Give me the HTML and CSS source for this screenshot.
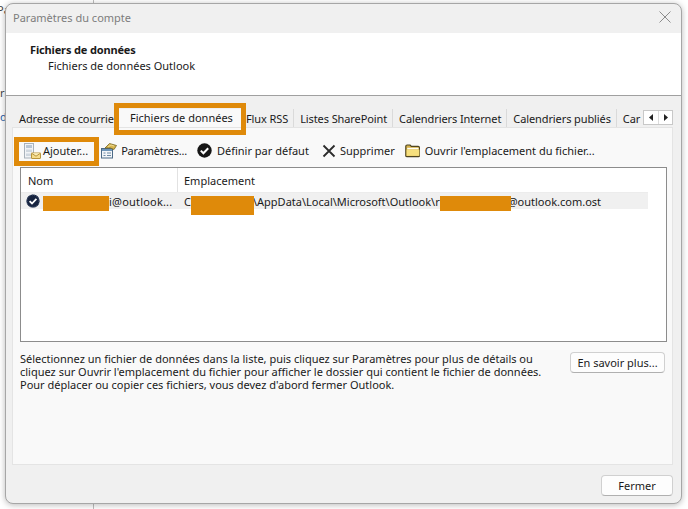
FILE: index.html
```html
<!DOCTYPE html>
<html lang="fr">
<head>
<meta charset="utf-8">
<title>Paramètres du compte</title>
<link rel="stylesheet" href="styles.css">
</head>
<body>
<div class="backdrop">
  <span class="bg-text bg-pa">Pa</span>
  <span class="bg-text bg-r">r</span>
  <span class="bg-text bg-d">d</span>
  <i class="bg-line"></i>
</div>
<main class="window">
  <header class="titlebar">
    <span class="title">Paramètres du compte</span>
    <svg class="close" width="12" height="12" viewBox="0 0 12 12"><path d="M.5.5l11 11M11.5.5l-11 11" stroke="#8c8c8c" stroke-width="1" fill="none"/></svg>
  </header>
  <section class="head">
    <div class="head-title">Fichiers de données</div>
    <div class="head-sub">Fichiers de données Outlook</div>
  </section>
  <section class="body">
    <nav class="tabs">
      <span class="tab tab-first">Adresse de courrier</span>
      <span class="tab tab-active">Fichiers de données</span>
      <span class="tab tab-flux">Flux RSS</span>
      <span class="tab">Listes SharePoint</span>
      <span class="tab">Calendriers Internet</span>
      <span class="tab">Calendriers publiés</span>
      <span class="tab tab-last">Car</span>
      <span class="scroller">
        <span class="arrow"><svg width="5" height="7" viewBox="0 0 5 7"><path d="M4 0v7L0 3.5z" fill="#222"/></svg></span>
        <span class="arrow"><svg width="5" height="7" viewBox="0 0 5 7"><path d="M1 0v7l4-3.5z" fill="#222"/></svg></span>
      </span>
    </nav>
    <div class="panel">
      <div class="toolbar">
        <span class="tool tool-add">
          <svg width="17" height="16" viewBox="0 0 17 16"><rect x=".5" y=".5" width="9" height="14.5" fill="#f1f3f6" stroke="#a9b2bb"/><rect x="2" y="2" width="6" height="3" fill="#b9c6d4"/><rect x="2" y="6.5" width="6" height="2.5" fill="#cfd7df"/><rect x="2" y="10.5" width="6" height="2.5" fill="#cfd7df"/><rect x="7.5" y="10" width="9" height="5.5" rx=".5" fill="#f5dc8c" stroke="#b8943c"/><path d="M7.5 10.2l4.5 3 4.5-3" fill="#fbeebb" stroke="#b8943c"/></svg>
          <span>Ajouter...</span>
        </span>
        <span class="tool tool-params">
          <svg width="17" height="17" viewBox="0 0 17 17"><rect x="1.5" y="6.5" width="11" height="9.5" fill="#f2f5f8" stroke="#4c6a86"/><rect x="2" y="7" width="10" height="2" fill="#6d94b8"/><path d="M3.5 11h2M7 11h4M3.5 13.5h2M7 13.5h4" stroke="#6d89a3"/><path d="M5 6l4.5-4.5 7 2-2.5 4-3.5-1.5z" fill="#d8b650" stroke="#75631f" stroke-width=".8"/><path d="M8 5l3-2 3 1" fill="none" stroke="#f3e2a0" stroke-width=".8"/></svg>
          <span class="tight">Paramètres...</span>
        </span>
        <span class="tool tool-default">
          <svg width="15" height="15" viewBox="0 0 15 15"><circle cx="7.5" cy="7.5" r="7.2" fill="#161616"/><path d="M3.8 7.6l2.6 2.6 4.8-5" fill="none" stroke="#fff" stroke-width="2"/></svg>
          <span>Définir par défaut</span>
        </span>
        <span class="tool tool-del">
          <svg width="14" height="14" viewBox="0 0 14 14"><path d="M1.5 1.5l11 11M12.5 1.5l-11 11" stroke="#2c2c2c" stroke-width="1.8" fill="none"/></svg>
          <span>Supprimer</span>
        </span>
        <span class="tool tool-open">
          <svg width="16" height="14" viewBox="0 0 16 14"><path d="M.8 11.7V2.3q0-1.3 1.3-1.3h3l1.3 1.4h6.8q1.2 0 1.2 1.2v8.1q0 1-1 1H1.8q-1 0-1-1z" fill="#d6b24a" stroke="#4f4520" stroke-width="1.2"/><path d="M2.2 3.8h11.4v1.6H2.2z" fill="#fdfdf6"/><path d="M1.6 5.6h12.8v6.2H1.6z" fill="#f7e07e"/></svg>
          <span>Ouvrir l'emplacement du fichier...</span>
        </span>
      </div>
      <div class="list">
        <div class="list-head">
          <span class="col-name">Nom</span>
          <span class="col-path">Emplacement</span>
        </div>
        <div class="list-row">
          <span class="col-name cell-name">
            <svg width="14" height="14" viewBox="0 0 14 14"><circle cx="7" cy="7" r="6.6" fill="#16233f"/><circle cx="7" cy="7" r="6" fill="none" stroke="#51617f" stroke-dasharray="1 1.2"/><path d="M3.6 7.1l2.4 2.4 4.4-4.6" fill="none" stroke="#fff" stroke-width="1.8"/></svg>
            <span class="name-text">i@outlook...</span>
          </span>
          <span class="col-path cell-path"><span class="path-c">C</span><span class="path-mid">\AppData\Local\Microsoft\Outlook\r</span><span class="path-end">@outlook.com.ost</span></span>
          <i class="mask mask-a"></i><i class="mask mask-b"></i><i class="mask mask-c"></i>
        </div>
      </div>
      <div class="info">
        <p class="info-text">Sélectionnez un fichier de données dans la liste, puis cliquez sur Paramètres pour plus de détails ou<br>cliquez sur Ouvrir l'emplacement du fichier pour afficher le dossier qui contient le fichier de données.<br>Pour déplacer ou copier ces fichiers, vous devez d'abord fermer Outlook.</p>
        <span class="btn btn-more">En savoir plus...</span>
      </div>
    </div>
    <footer class="foot"><span class="btn btn-close">Fermer</span></footer>
    <i class="frame frame-tab"></i>
    <i class="frame frame-add"></i>
  </section>
</main>
</body>
</html>
```
FILE: styles.css
```css
* { box-sizing: border-box; }
html, body { margin: 0; height: 100%; }
body {
  position: relative;
  width: 688px;
  height: 509px;
  overflow: hidden;
  background: #fff;
  font: 11px/13px "Noto Sans", sans-serif;
  color: #1a1a1a;
}
.backdrop { position: absolute; inset: 0; overflow: hidden; }
.bg-text { position: absolute; color: #444; }
.bg-pa { top: 3px; left: -3px; }
.bg-r { top: 86px; left: 0; }
.bg-d { top: 110px; left: 0; color: #2a5fa8; }
.bg-line { position: absolute; left: 93px; top: 0; width: 1px; height: 509px; background: #bdbdbd; }
.window {
  position: absolute;
  left: 5px;
  top: 3px;
  width: 677px;
  height: 501px;
  display: flex;
  flex-direction: column;
  background: #f0f0f0;
  border: 1px solid #a6a6a6;
  border-radius: 8px;
  box-shadow: 0 1px 6px rgba(0,0,0,.28);
}
.titlebar {
  height: 29px;
  flex: none;
  display: flex;
  align-items: center;
  justify-content: space-between;
  padding: 0 10px 3px 7px;
}
.title { color: #7d7d7d; }
.close { display: block; }
.head {
  height: 63px;
  flex: none;
  background: #fff;
  border-bottom: 1px solid #a0a0a0;
  padding: 9px 0 0 24px;
}
.head-title { font-weight: 700; line-height: 16px; letter-spacing: -.15px; }
.head-sub { padding-left: 18px; line-height: 16px; }
.body { flex: 1; display: flex; flex-direction: column; position: relative; padding: 13px 8px 0 6px; }
.tabs {
  height: 18px;
  flex: none;
  display: flex;
  position: relative;
  overflow: hidden;
  background: #f0f0f0;
  letter-spacing: -.1px;
}
.tab {
  flex: none;
  padding: 3px 5px 0 6px;
  border-right: 1px solid #dadada;
  background: #f0f0f0;
  white-space: nowrap;
}
.tab-first { width: 106px; padding-left: 7px; border-right: 0; overflow: hidden; }
.tab-active { width: 124px; background: #f9f9f9; padding: 2px 0 0 12px; border-right: 0; letter-spacing: 0; }
.tab-flux { padding-left: 4px; }
.tab-last { border-right: 0; }
.scroller {
  position: absolute;
  right: 0;
  top: 1px;
  display: flex;
  height: 15px;
  background: #fff;
  border: 1px solid #c8c8c8;
}
.arrow { width: 14px; display: flex; align-items: center; justify-content: center; }
.arrow + .arrow { border-left: 1px solid #dcdcdc; }
.panel {
  height: 338px;
  flex: none;
  background: #f9f9f9;
  border: 1px solid #e4e4e4;
  padding: 0 5px 0 7px;
  display: flex;
  flex-direction: column;
}
.toolbar { height: 39px; flex: none; display: flex; align-items: center; padding-top: 6px; }
.tool { display: flex; align-items: center; gap: 4px; white-space: nowrap; }
.tight { letter-spacing: -.2px; }
.tool-add { margin-left: 4px; gap: 2px; }
.tool-params { margin-left: 12px; gap: 4px; }
.tool-default { margin-left: 10px; gap: 5px; }
.tool-del { margin-left: 13px; gap: 4px; }
.tool-open { margin-left: 10px; }
.list {
  height: 175px;
  flex: none;
  background: #fff;
  border: 1px solid #8c8c8c;
}
.list-head {
  height: 25px;
  width: 627px;
  display: flex;
  align-items: center;
  border-bottom: 1px solid #ececec;
}
.list-head .col-name { width: 157px; height: 100%; display: flex; align-items: center; padding-left: 7px; border-right: 1px solid #e2e2e2; }
.list-head .col-path { padding-left: 6px; }
.list-row {
  position: relative;
  width: 627px;
  height: 16px;
  background: #f0f0f0;
  display: flex;
  align-items: center;
}
.cell-name { width: 157px; display: flex; align-items: center; padding-left: 5px; }
.name-text { margin-left: 69px; letter-spacing: .2px; }
.cell-path { padding-left: 6px; white-space: nowrap; }
.path-mid { margin-left: 62px; }
.path-end { margin-left: 68px; }
.mask { position: absolute; background: #df8a0a; }
.mask-a { left: 22px; top: 3px; width: 66px; height: 15px; }
.mask-b { left: 170px; top: 3px; width: 63px; height: 19px; }
.mask-c { left: 419px; top: 3px; width: 71px; height: 15px; }
.info { display: flex; justify-content: space-between; align-items: flex-start; padding-top: 10px; }
.info-text { margin: 0; white-space: nowrap; }
.btn {
  display: flex;
  align-items: center;
  justify-content: center;
  background: #fdfdfd;
  border: 1px solid #d0d0d0;
  border-bottom-color: #b0b0b0;
  border-radius: 4px;
}
.btn-more { width: 95px; height: 21px; margin-right: 2px; }
.foot { flex: 1; display: flex; justify-content: flex-end; align-items: flex-start; padding-top: 10px; }
.btn-close { width: 72px; height: 21px; }
.frame { position: absolute; border: 5px solid #df8a0a; pointer-events: none; }
.frame-tab { left: 108px; top: 7px; width: 132px; height: 32px; }
.frame-add { left: 8px; top: 41px; width: 85px; height: 29px; }
```
